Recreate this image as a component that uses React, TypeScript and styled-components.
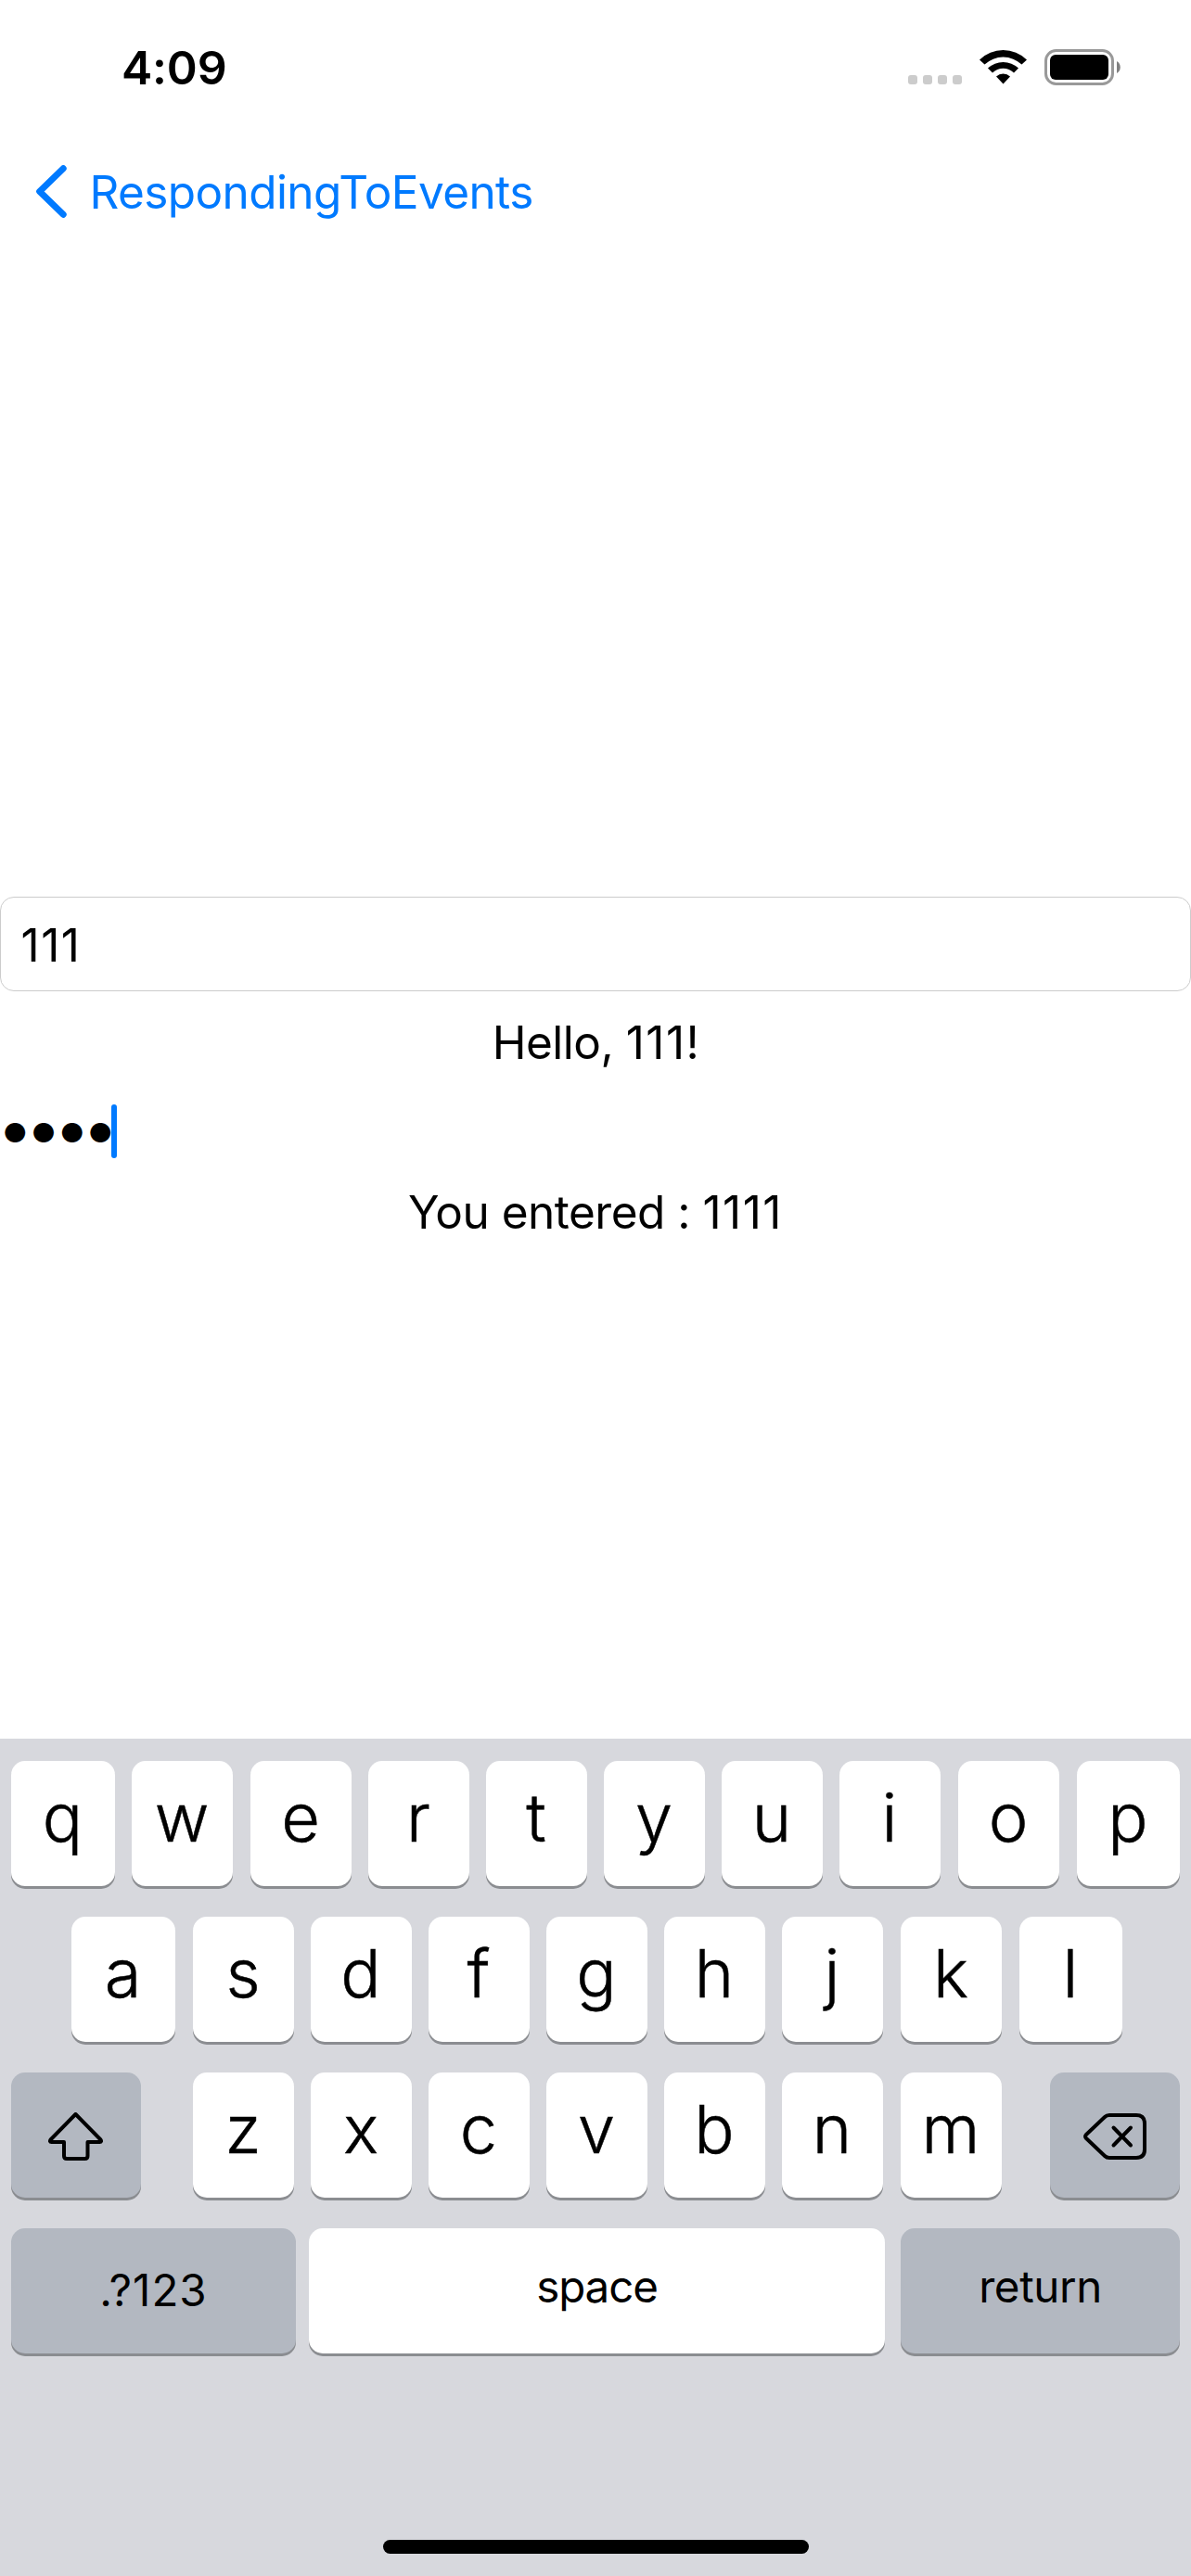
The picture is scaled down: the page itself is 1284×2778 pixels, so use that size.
import React from "react";
import styled, { createGlobalStyle } from "styled-components";

const GlobalStyle = createGlobalStyle`
  * { box-sizing: border-box; }
  body { margin: 0; background: #fff; }
`;

const Screen = styled.div`
  width: 1284px;
  height: 2778px;
  display: flex;
  flex-direction: column;
  overflow: hidden;
  background: #fff;
  color: #000;
  font-family: Inter, "Liberation Sans", sans-serif;
`;

const StatusBar = styled.header`
  height: 141px;
  padding: 43px 76px 0 131px;
  display: flex;
  justify-content: space-between;
`;

const Clock = styled.time`
  font-size: 50px;
  font-weight: 600;
  line-height: 60px;
  letter-spacing: -0.2px;
`;

const StatusIcons = styled.div`
  display: flex;
  height: 60px;
  padding-top: 10px;
`;

const SignalDots = styled.div`
  display: flex;
  gap: 6px;
  margin: 28px 19px 0 0;
`;

const SignalDot = styled.span`
  width: 10px;
  height: 10px;
  border-radius: 3px;
  background: #ccc;
`;

const WifiIcon = styled.svg`
  width: 51px;
  height: 38px;
  margin-right: 19px;
`;

const Battery = styled.svg`
  width: 82px;
  height: 39px;
`;

const NavBar = styled.nav`
  height: 132px;
  padding: 37px 0 0 39px;
  display: flex;
  color: #007aff;
`;

const Chevron = styled.svg`
  width: 33px;
  height: 57px;
`;

const BackLabel = styled.span`
  margin-left: 24.5px;
  font-size: 49.5px;
  line-height: 58px;
  letter-spacing: -0.6px;
`;

const Form = styled.main`
  flex: 1;
  padding-top: 694px;
  display: flex;
  flex-direction: column;
`;

const NameField = styled.div`
  height: 102px;
  padding-left: 21.5px;
  border: 1px solid #ccc;
  border-radius: 15px;
  font-size: 49.5px;
  line-height: 102px;
`;

const Message = styled.p<{ $top: number }>`
  margin: ${(p) => p.$top}px 0 0;
  height: 60px;
  font-size: 49.5px;
  line-height: 60px;
  letter-spacing: -0.5px;
  text-align: center;
`;

const Digits = styled.span`
  letter-spacing: 1.5px;
`;

const SecretField = styled.div`
  height: 58px;
  margin-top: 37px;
  padding-left: 3px;
  display: flex;
  align-items: flex-start;
`;

const Bullets = styled.span`
  width: 117px;
  font-size: 29px;
  letter-spacing: 4.2px;
  line-height: 62px;
  white-space: nowrap;
`;

const Caret = styled.span`
  width: 6px;
  height: 58px;
  border-radius: 3px;
  background: #007aff;
`;

const Keyboard = styled.section`
  height: 903px;
  padding: 24px 12px 24px;
  display: flex;
  flex-direction: column;
  gap: 33px;
  background: #d7d8dd;
`;

const KeyRow = styled.div<{ $indent?: number }>`
  display: flex;
  height: 135px;
  padding-left: ${(p) => p.$indent ?? 0}px;
`;

const Key = styled.button<{ $width: number; $gap: number; $dark?: boolean }>`
  flex: none;
  width: ${(p) => p.$width}px;
  height: 135px;
  margin: 0 0 0 ${(p) => p.$gap}px;
  padding: 0;
  border: 0;
  border-radius: 15px;
  background: ${(p) => (p.$dark ? "#b3b8c1" : "#fff")};
  box-shadow: 0 3px 0 #8b8d91;
  color: #000;
  font-family: inherit;
  text-align: center;
  display: flex;
  justify-content: center;
`;

const Letter = styled.span`
  font-size: 72px;
  font-weight: 360;
  line-height: 122px;
  padding-right: 1px;
  -webkit-text-stroke: 0.5px #000;
`;

const Caption = styled.span<{ $line: number; $tracking: number }>`
  font-size: 47.5px;
  line-height: ${(p) => p.$line}px;
  letter-spacing: ${(p) => p.$tracking}px;
`;

const KeyIcon = styled.svg<{ $w: number; $h: number; $top: number }>`
  width: ${(p) => p.$w}px;
  height: ${(p) => p.$h}px;
  margin-top: ${(p) => p.$top}px;
`;

const HomeIndicator = styled.div`
  width: 459px;
  height: 15px;
  margin: auto auto 0 401px;
  border-radius: 8px;
  background: #000;
`;

type KeySpec = [label: string, gap: number, width: number];

const topRow: KeySpec[] = [
  ["q", 0, 112], ["w", 18, 109], ["e", 19, 109], ["r", 18, 109], ["t", 18, 109],
  ["y", 18, 109], ["u", 18, 109], ["i", 18, 109], ["o", 19, 109], ["p", 19, 111],
];
const homeRow: KeySpec[] = [
  ["a", 0, 112], ["s", 19, 109], ["d", 18, 109], ["f", 18, 109], ["g", 18, 109],
  ["h", 18, 109], ["j", 18, 109], ["k", 19, 109], ["l", 19, 111],
];
const bottomRow: KeySpec[] = [
  ["z", 56, 109], ["x", 18, 109], ["c", 18, 109], ["v", 18, 109],
  ["b", 18, 109], ["n", 18, 109], ["m", 19, 109],
];

const LetterKeys = ({ keys }: { keys: KeySpec[] }) => (
  <>
    {keys.map(([label, gap, width]) => (
      <Key key={label} $gap={gap} $width={width}>
        <Letter>{label}</Letter>
      </Key>
    ))}
  </>
);

export default function App() {
  return (
    <>
      <GlobalStyle />
      <Screen>
        <StatusBar>
          <Clock>4:09</Clock>
          <StatusIcons>
            <SignalDots>
              <SignalDot /><SignalDot /><SignalDot /><SignalDot />
            </SignalDots>
            <WifiIcon viewBox="0 0 51 38">
              <path d="M0 11.5 A36.5 36.5 0 0 1 51 11.5 L45.5 16.6 A29 29 0 0 0 5.5 16.6 Z" />
              <path d="M9 20.5 A24 24 0 0 1 42 20.5 L37 25.5 A16.5 16.5 0 0 0 14 25.5 Z" />
              <path d="M18 29.5 A11 11 0 0 1 33 29.5 L25.5 37.5 Z" />
            </WifiIcon>
            <Battery viewBox="0 0 82 39">
              <rect x="1.5" y="1.5" width="72" height="36" rx="11" fill="none" stroke="#999" strokeWidth="3" />
              <rect x="6" y="6" width="63" height="27" rx="6" />
              <path d="M78 13 A7.5 7.5 0 0 1 78 26 Z" fill="#808080" />
            </Battery>
          </StatusIcons>
        </StatusBar>
        <NavBar>
          <Chevron viewBox="0 0 33 57" fill="none" stroke="currentColor" strokeWidth="7" strokeLinecap="round" strokeLinejoin="round">
            <path d="M29.2 3.7 L3.7 28.5 L29.2 53.3" />
          </Chevron>
          <BackLabel>RespondingToEvents</BackLabel>
        </NavBar>
        <Form>
          <NameField><Digits>111</Digits></NameField>
          <Message $top={25}>Hello, <Digits>111</Digits>!</Message>
          <SecretField>
            <Bullets>●●●●</Bullets>
            <Caret />
          </SecretField>
          <Message $top={28}>You entered : <Digits>1111</Digits></Message>
        </Form>
        <Keyboard>
          <KeyRow><LetterKeys keys={topRow} /></KeyRow>
          <KeyRow $indent={65}><LetterKeys keys={homeRow} /></KeyRow>
          <KeyRow>
            <Key $gap={0} $width={140} $dark aria-label="shift">
              <KeyIcon $w={60} $h={53} $top={43} viewBox="0 0 60 53" fill="none" stroke="#000" strokeWidth="4" strokeLinejoin="round">
                <path d="M29.5 2 L56.5 29.5 Q58 32 55.5 32 H42.5 V47 Q42.5 50 39.5 50 H20 Q17 50 17 47 V32 H3.5 Q1 32 2.5 29.5 Z" />
              </KeyIcon>
            </Key>
            <LetterKeys keys={bottomRow} />
            <Key $gap={52} $width={140} $dark aria-label="delete">
              <KeyIcon $w={68} $h={50} $top={44} viewBox="0 0 68 50" fill="none" stroke="#000" strokeWidth="4" strokeLinecap="round" strokeLinejoin="round">
                <path d="M28 2 H57 Q66 2 66 11 V39 Q66 48 57 48 H28 Q25 48 23 46 L3 27 Q1 25 3 23 L23 4 Q25 2 28 2 Z" />
                <path d="M32.5 15.5 L51 34.5 M51 15.5 L32.5 34.5" />
              </KeyIcon>
            </Key>
          </KeyRow>
          <KeyRow>
            <Key $gap={0} $width={307} $dark><Caption $line={133} $tracking={1}>.?123</Caption></Key>
            <Key $gap={14} $width={621}><Caption $line={125} $tracking={-1.1}>space</Caption></Key>
            <Key $gap={17} $width={301} $dark><Caption $line={125} $tracking={-0.4}>return</Caption></Key>
          </KeyRow>
          <HomeIndicator />
        </Keyboard>
      </Screen>
    </>
  );
}
